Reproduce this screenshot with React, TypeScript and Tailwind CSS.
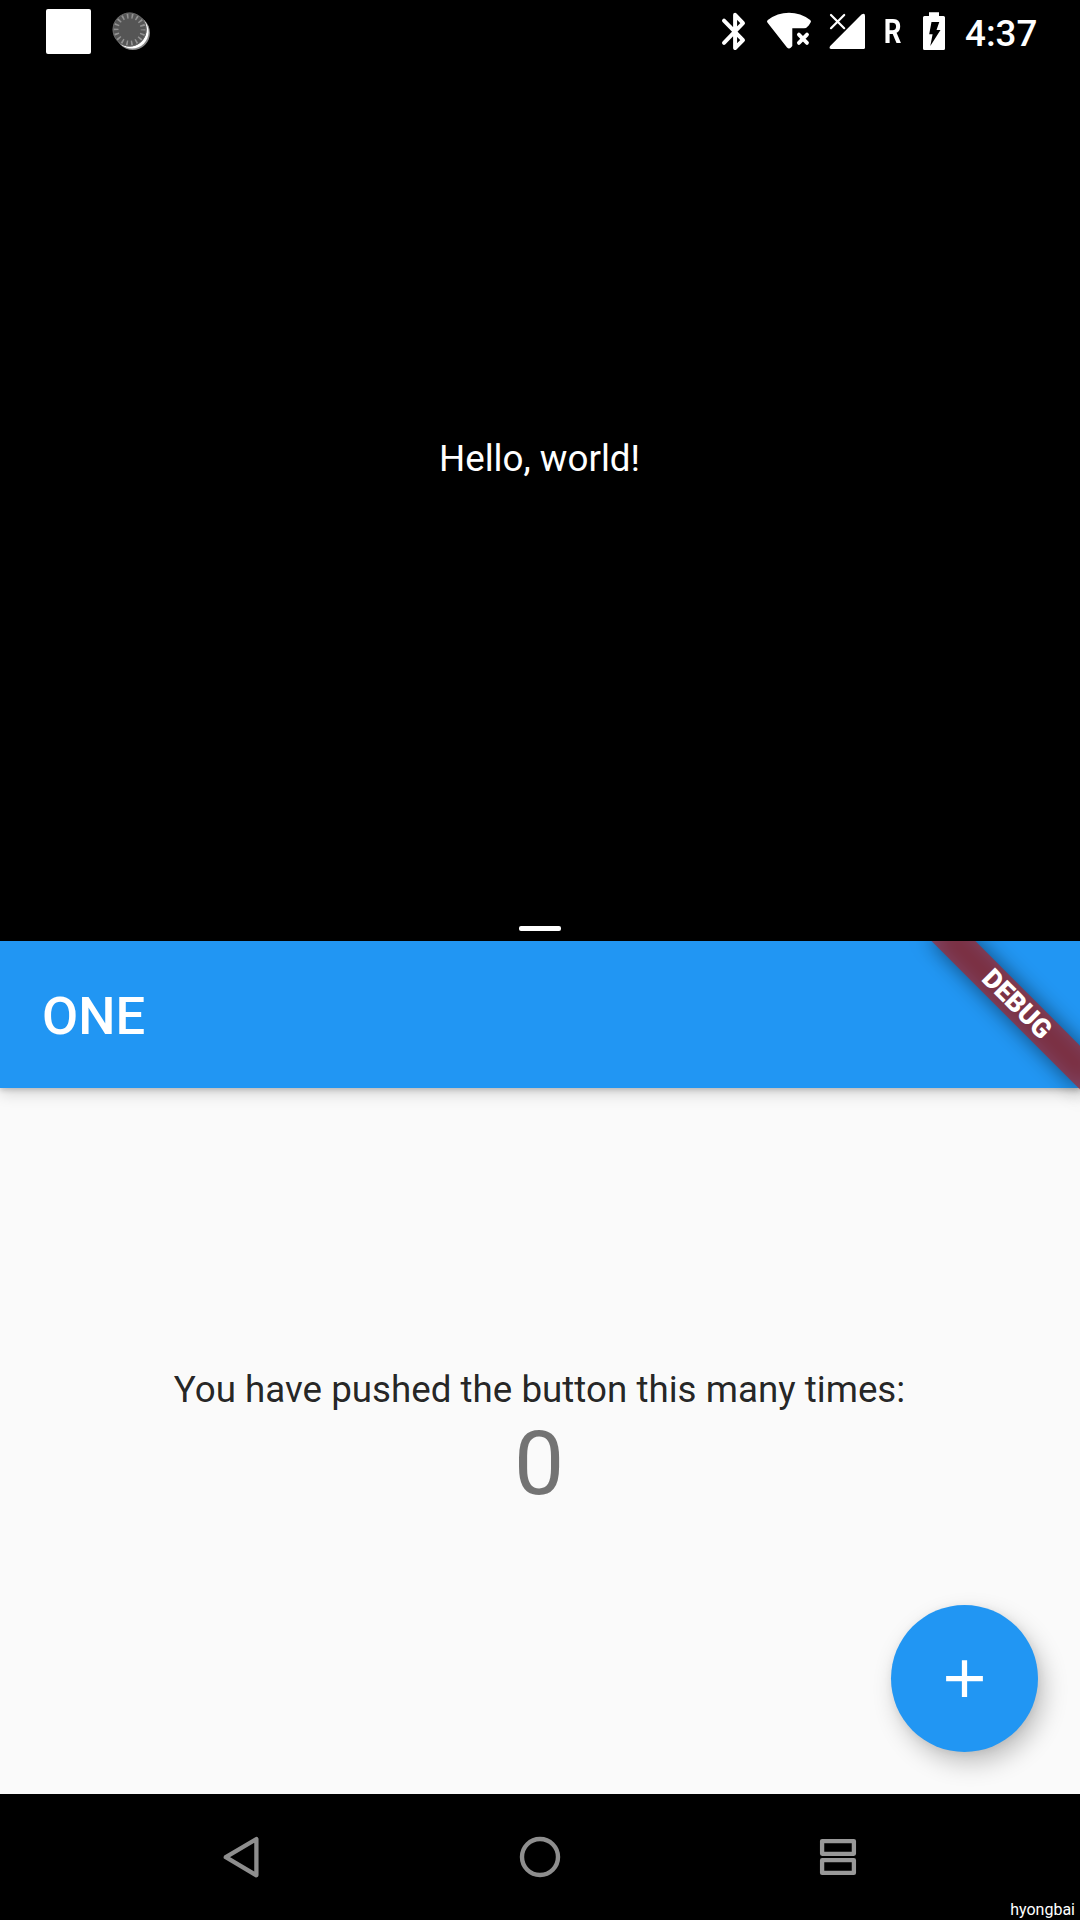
import React from "react";

function RecordingIcon() {
  return (
    <svg className="ml-[18px] block h-[63px] w-[44px]" viewBox="109 0 44 63">
      <circle cx="132.8" cy="32.8" r="17.2" fill="#8a8a8a" />
      <circle cx="132" cy="32" r="16.6" fill="#fff" />
      <circle cx="129.6" cy="29.6" r="17" fill="#555" />
      <circle cx="129.6" cy="29.6" r="13.6" fill="none" stroke="#929292" strokeWidth="5" strokeDasharray="1.6 3.147" strokeDashoffset="0.8" />
      <circle cx="129.6" cy="29.6" r="16.5" fill="none" stroke="#666" strokeWidth="1" />
    </svg>
  );
}

function BluetoothIcon() {
  return (
    <svg className="block h-[63px] w-[28px]" viewBox="720 0 28 63" fill="none" stroke="#fff" strokeWidth="4" strokeLinecap="round" strokeLinejoin="round">
      <path d="M724 20.6 743 40.2 735.1 48V14.8L743 23.2 724 42.8" />
    </svg>
  );
}

function WifiOffIcon() {
  return (
    <svg className="ml-[16px] block h-[63px] w-[50px]" viewBox="764 0 50 63">
      <path fill="#fff" d="M767.4 22.6Q766.4 21 767.8 20 777.4 12.8 789 12.8 800.600 12.8 810.200 20 811.600 21 810.600 22.600L808.700 25.600Q806.800 28.300 804 28.300H792.300V46L791 47.600Q789 49.600 787 47.600Z" />
      <path fill="none" stroke="#fff" strokeWidth="3.800" strokeLinecap="round" d="M798.900 34.600 807 42.900M807 34.600 798.900 42.900" />
    </svg>
  );
}

function SignalIcon() {
  return (
    <svg className="ml-[13px] block h-[63px] w-[40px]" viewBox="827 0 40 63">
      <path fill="#fff" d="M861.500 14.500Q865 12.200 865 16V47.500Q865 49 863.500 49H831.500Q828.400 49 830.200 46Z" />
      <path fill="none" stroke="#fff" strokeWidth="2.200" strokeLinecap="round" d="M831 15 844.200 28.200M844.200 15 831 28.200" />
    </svg>
  );
}

function BatteryIcon() {
  return (
    <svg className="ml-[18px] block h-[63px] w-[26px]" viewBox="921 0 26 63">
      <path fill="#fff" d="M929 12.300H939V16H943.500Q945 16 945 17.500V48.500Q945 50 943.500 50H924.500Q923 50 923 48.500V17.500Q923 16 924.500 16H929Z" />
      <path fill="#000" d="M931.500 22H939.300L936.500 30H940.500L930.300 46 932.600 34.300H929.200Z" />
    </svg>
  );
}

function StatusBar() {
  return (
    <header className="flex h-[63px] shrink-0 items-center pl-[46px] text-white">
      <div className="h-[45px] w-[45px] rounded-[2px] bg-white" />
      <RecordingIcon />
      <div className="grow" />
      <BluetoothIcon />
      <WifiOffIcon />
      <SignalIcon />
      <span className="ml-[15px] w-[21px] origin-left scale-x-[0.840] pl-[2px] text-[33px] leading-[63px] font-bold">R</span>
      <BatteryIcon />
      <span className="ml-[18px] w-[115px] pt-[4px] text-[36.75px] leading-[63px] font-medium">4:37</span>
    </header>
  );
}

function DebugBanner() {
  return (
    <div className="pointer-events-none absolute top-0 right-0 h-full w-full overflow-hidden">
      <div className="absolute top-0 right-0 h-0 w-0 rotate-45">
        <div className="absolute top-[73.5px] -left-[105px] h-[31.5px] w-[210px] bg-black/50 blur-[10.4px]" />
        <div className="absolute top-[73.5px] -left-[105px] flex h-[31.5px] w-[210px] items-center justify-center bg-[#b71c1c]/63 text-[26.775px] leading-none font-black text-white">
          DEBUG
        </div>
      </div>
    </div>
  );
}

function NavigationBar() {
  return (
    <nav className="relative flex h-[126px] shrink-0 items-center bg-black pl-[220px]">
      <svg className="block h-[126px] w-[44px]" viewBox="220 1794 44 126" fill="none" stroke="#8e8e8e" strokeWidth="4.300" strokeLinejoin="round">
        <path d="M225.800 1857.200 256.400 1839V1875.300Z" />
      </svg>
      <svg className="ml-[254px] block h-[126px] w-[44px]" viewBox="518 1794 44 126">
        <circle cx="540" cy="1857" r="18" fill="none" stroke="#8e8e8e" strokeWidth="4.400" />
      </svg>
      <svg className="ml-[254px] block h-[126px] w-[44px]" viewBox="816 1794 44 126" fill="none" stroke="#999" strokeWidth="4.300" strokeLinejoin="round">
        <rect x="822.100" y="1841.100" width="31.800" height="12.700" />
        <rect x="822.100" y="1860.200" width="31.800" height="12.700" />
      </svg>
      <span className="absolute right-[5px] bottom-0 text-[16px] leading-[20px] text-white">hyongbai</span>
    </nav>
  );
}

export default function App() {
  return (
    <div className="flex h-[1920px] w-[1080px] flex-col overflow-hidden bg-black font-[Roboto,sans-serif]">
      <section className="flex h-[916px] shrink-0 flex-col text-white">
        <StatusBar />
        <div className="flex grow items-center justify-center pr-px pb-[63px] text-[36.75px] leading-[43px]">Hello, world!</div>
      </section>
      <div className="flex h-[25px] shrink-0 items-center justify-center">
        <div className="h-[5px] w-[42px] rounded-[2px] bg-white" />
      </div>
      <section className="relative flex h-[853px] shrink-0 flex-col overflow-hidden bg-[#fafafa]">
        <header className="relative flex h-[147px] shrink-0 items-center bg-[#2196f3] px-[42px] pt-[2px] shadow-[0_2px_5px_rgba(0,0,0,0.18),0_6px_14px_rgba(0,0,0,0.14)]">
          <h1 className="text-[52.5px] leading-[62px] font-medium text-white">ONE</h1>
        </header>
        <main className="flex grow flex-col items-center justify-center pt-[2px] pr-px">
          <p className="text-[36.75px] leading-[43px] text-black/87">You have pushed the button this many times:</p>
          <p className="pr-px text-[89.25px] leading-[105px] text-black/54">0</p>
        </main>
        <button aria-label="Increment" className="absolute right-[42px] bottom-[42px] flex h-[147px] w-[147px] items-center justify-center rounded-full bg-[#2196f3] shadow-[6px_11px_24px_rgba(0,0,0,0.23),1px_2px_8px_rgba(0,0,0,0.07)]">
          <svg className="h-[63px] w-[63px]" viewBox="0 0 24 24" fill="#fff">
            <path d="M19 13h-6v6h-2v-6H5v-2h6V5h2v6h6v2z" />
          </svg>
        </button>
        <DebugBanner />
      </section>
      <NavigationBar />
    </div>
  );
}
